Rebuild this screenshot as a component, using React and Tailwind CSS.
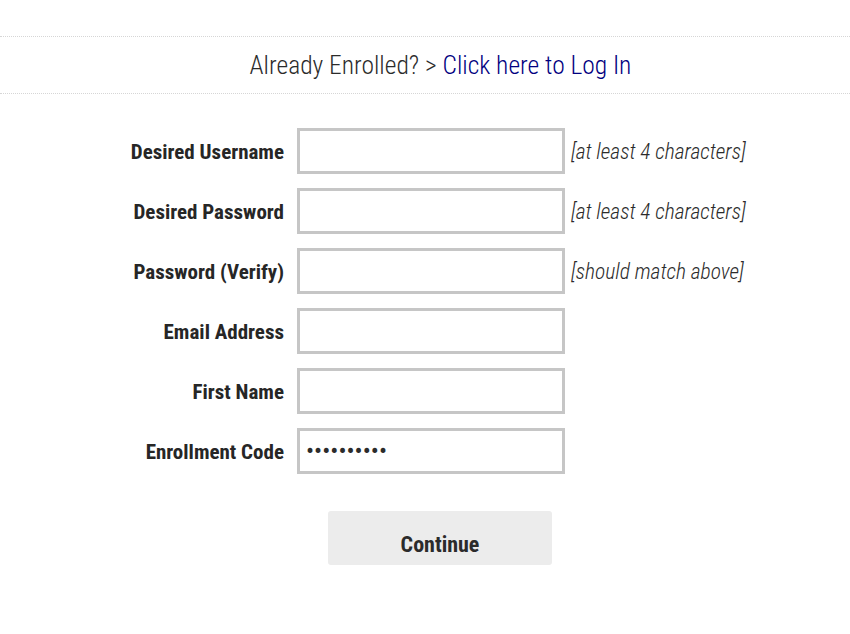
import React from 'react';

const fields = [
    { label: 'Desired Username', type: 'text', hint: '[at least 4 characters]' },
    { label: 'Desired Password', type: 'password', hint: '[at least 4 characters]' },
    { label: 'Password (Verify)', type: 'password', hint: '[should match above]' },
    { label: 'Email Address', type: 'email', hint: '' },
    { label: 'First Name', type: 'text', hint: '' },
    { label: 'Enrollment Code', type: 'password', hint: '', value: '1234567890' },
];

function App() {
    return (
        <div className="min-h-screen bg-white text-[#2b2b2b] font-['Roboto_Condensed','Roboto',sans-serif] [font-stretch:condensed]">
            <div className="pt-9">
                <div className="border-y border-dotted border-[#d6d6d6] h-[58px] flex items-center justify-center pl-[31px] text-[25.5px] font-light">
                    <span>Already Enrolled? &gt; </span>
                    <a href="#" className="ml-[6px] text-[#000080]">Click here to Log In</a>
                </div>
            </div>

            <form className="mt-[34px] grid grid-cols-[297px_268px_1fr] gap-y-[14px] items-center">
                {fields.map((f) => (
                    <React.Fragment key={f.label}>
                        <label className="pr-[13px] pt-[1px] text-right text-[21px] font-bold leading-[44px] text-[#262626]">
                            {f.label}
                        </label>
                        <input
                            type={f.type}
                            defaultValue={f.value || ''}
                            className="h-[46px] w-[268px] border-[3px] border-[#c6c6c6] px-[6px] text-[24px] outline-none"
                        />
                        <span className="pl-[6px] pt-[1px] text-[21.5px] font-light italic leading-[44px]">{f.hint}</span>
                    </React.Fragment>
                ))}
            </form>

            <div className="mt-[37px] flex justify-center pl-[30px]">
                <button className="w-[224px] h-[54px] bg-[#ececec] rounded-[3px] pt-[12px] text-[22px] font-bold">
                    Continue
                </button>
            </div>
        </div>
    );
}

export default App;
